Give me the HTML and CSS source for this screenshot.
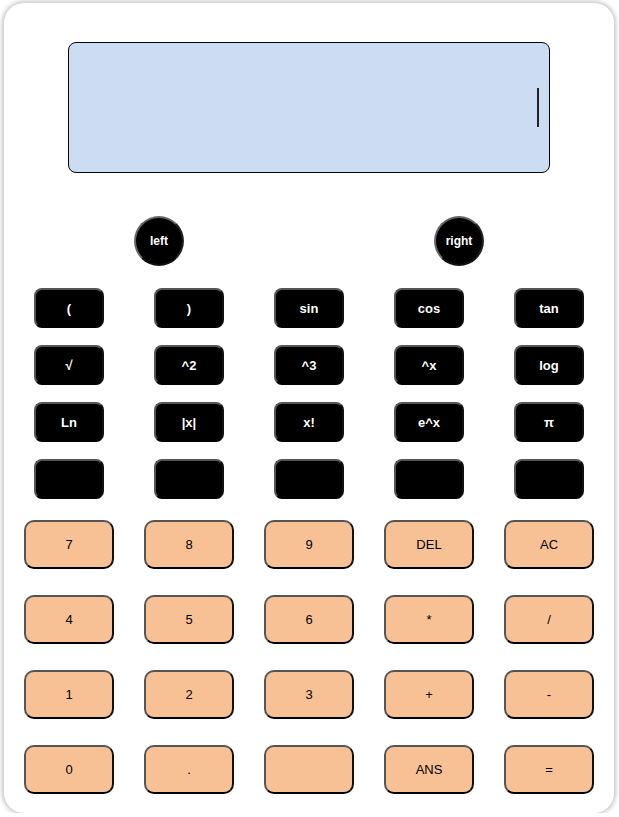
FILE: index.html
```html
<!DOCTYPE html>
<html>
<head>
<meta charset="utf-8">
<link rel="stylesheet" href="styles.css">
</head>
<body>
<div class="calc">
  <div class="display"><span class="cursor"></span></div>
  <div class="nav">
    <button class="round">left</button>
    <button class="round">right</button>
  </div>
  <div class="funcs">
    <button class="fn">(</button>
    <button class="fn">)</button>
    <button class="fn">sin</button>
    <button class="fn">cos</button>
    <button class="fn">tan</button>
    <button class="fn">√</button>
    <button class="fn">^2</button>
    <button class="fn">^3</button>
    <button class="fn">^x</button>
    <button class="fn">log</button>
    <button class="fn">Ln</button>
    <button class="fn">|x|</button>
    <button class="fn">x!</button>
    <button class="fn">e^x</button>
    <button class="fn">π</button>
    <button class="fn"></button>
    <button class="fn"></button>
    <button class="fn"></button>
    <button class="fn"></button>
    <button class="fn"></button>
  </div>
  <div class="keys">
    <button class="key">7</button>
    <button class="key">8</button>
    <button class="key">9</button>
    <button class="key">DEL</button>
    <button class="key">AC</button>
    <button class="key">4</button>
    <button class="key">5</button>
    <button class="key">6</button>
    <button class="key">*</button>
    <button class="key">/</button>
    <button class="key">1</button>
    <button class="key">2</button>
    <button class="key">3</button>
    <button class="key">+</button>
    <button class="key">-</button>
    <button class="key">0</button>
    <button class="key">.</button>
    <button class="key"></button>
    <button class="key">ANS</button>
    <button class="key">=</button>
  </div>
</div>
</body>
</html>
```
FILE: styles.css
```css
html, body {
  margin: 0;
  padding: 0;
  background: #ffffff;
}
body {
  font-family: "Liberation Sans", Arial, sans-serif;
}
.calc {
  box-sizing: border-box;
  margin: 3px 0 0 4px;
  width: 610px;
  height: 810px;
  background: #ffffff;
  border-radius: 20px;
  box-shadow: 0 0 4px 2px #c8c8c8;
  padding-top: 39px;
  display: flex;
  flex-direction: column;
  align-items: center;
}
.display {
  box-sizing: border-box;
  width: 482px;
  height: 131px;
  background: #cbdcf3;
  border: 1px solid #000;
  border-radius: 8px;
  display: flex;
  justify-content: flex-end;
  align-items: center;
}
.cursor {
  width: 2px;
  height: 39px;
  background: #222;
  margin-right: 10px;
}
.nav {
  width: 350px;
  margin-top: 43px;
  display: flex;
  justify-content: space-between;
}
button {
  font-family: "Liberation Sans", Arial, sans-serif;
  padding: 0;
  cursor: pointer;
}
.round {
  box-sizing: border-box;
  width: 50px;
  height: 50px;
  border-radius: 50%;
  background: #000;
  color: #fff;
  font-weight: bold;
  font-size: 12px;
  border: 2px solid;
  border-color: #666 #222 #111 #666;
}
.funcs {
  margin-top: 22px;
  display: grid;
  grid-template-columns: repeat(5, 70px);
  grid-auto-rows: 40px;
  column-gap: 50px;
  row-gap: 17px;
}
.fn {
  box-sizing: border-box;
  background: #000;
  color: #fff;
  font-weight: bold;
  font-size: 13px;
  border: 2px solid;
  border-color: #555 #111 #000 #555;
  border-radius: 8px;
}
.keys {
  margin-top: 21px;
  display: grid;
  grid-template-columns: repeat(5, 90px);
  grid-auto-rows: 49px;
  column-gap: 30px;
  row-gap: 26px;
}
.key {
  box-sizing: border-box;
  background: #f8c195;
  color: #000;
  font-size: 13px;
  border: 2px solid;
  border-color: #555 #111 #000 #555;
  border-radius: 10px;
}
```
